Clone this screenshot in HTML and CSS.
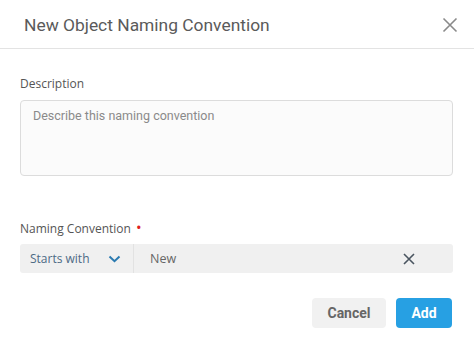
FILE: index.html
```html
<!DOCTYPE html>
<html lang="en">
<head>
    <meta charset="UTF-8">
    <title>New Object Naming Convention</title>
    <link rel="stylesheet" href="styles.css">
</head>
<body>
    <div class="dialog">
        <div class="dialog-header">
            <span class="dialog-title">New Object Naming Convention</span>
            <button class="close-btn" aria-label="Close">
                <svg width="16" height="16" viewBox="0 0 16 16"><path d="M1.5 1.5 L14.5 14.5 M14.5 1.5 L1.5 14.5" stroke="#8a8a8a" stroke-width="1.6" fill="none"/></svg>
            </button>
        </div>
        <div class="dialog-body">
            <label class="field-label">Description</label>
            <textarea class="desc-input" placeholder="Describe this naming convention"></textarea>

            <label class="field-label naming-label">Naming Convention <span class="required">&bull;</span></label>
            <div class="naming-row">
                <div class="mode-select">
                    <span>Starts with</span>
                    <svg width="13" height="8" viewBox="0 0 13 8"><path d="M1.5 1.5 L6.5 6.2 L11.5 1.5" stroke="#2a7ab0" stroke-width="2" fill="none"/></svg>
                </div>
                <div class="value-input">
                    <span>New</span>
                    <svg width="12" height="12" viewBox="0 0 12 12"><path d="M1 1 L11 11 M11 1 L1 11" stroke="#4a5560" stroke-width="1.6" fill="none"/></svg>
                </div>
            </div>
        </div>
        <div class="dialog-footer">
            <button class="btn btn-cancel">Cancel</button>
            <button class="btn btn-add">Add</button>
        </div>
    </div>
</body>
</html>
```

FILE: styles.css
```css
body, html {
    margin: 0;
    padding: 0;
    background: #fff;
    font-family: Roboto, 'Liberation Sans', Arial, sans-serif;
}
.dialog {
    width: 474px;
    height: 350px;
    background: #fff;
}
.dialog-header {
    display: flex;
    align-items: center;
    height: 48px;
    padding: 0 16px 0 24px;
    border-bottom: 1px solid #e3e3e3;
}
.dialog-title {
    flex: 1;
    font-size: 17.4px;
    color: #5a5a5a;
    padding-top: 1px;
}
.close-btn {
    border: none;
    background: none;
    padding: 0;
    width: 16px;
    height: 16px;
    margin-top: 2px;
    cursor: pointer;
}
.dialog-body {
    padding: 26px 21px 0 20px;
}
.field-label {
    display: block;
    font-family: 'Open Sans', 'Liberation Sans', sans-serif;
    font-size: 12px;
    color: #555;
    height: 17px;
    line-height: 17px;
}
.desc-input {
    display: block;
    box-sizing: border-box;
    width: 433px;
    height: 76px;
    margin-top: 8px;
    padding: 7px 12px;
    border: 1px solid #dcdcdc;
    border-radius: 4px;
    background: #fbfbfb;
    font-family: Roboto, 'Liberation Sans', sans-serif;
    font-size: 12.5px;
    resize: none;
    outline: none;
}
.desc-input::placeholder {
    color: #8a8a8a;
}
.naming-label {
    margin-top: 44px;
}
.required {
    color: #e02020;
    font-size: 15px;
    line-height: 10px;
    margin-left: 2px;
}
.naming-row {
    display: flex;
    height: 29px;
    margin-top: 7px;
    width: 433px;
    background: #f0f0f0;
    border-radius: 3px;
}
.mode-select {
    display: flex;
    align-items: center;
    justify-content: space-between;
    width: 114px;
    box-sizing: border-box;
    padding: 0 12px 0 10px;
    border-right: 1px solid #e2e2e2;
    font-family: 'Open Sans', 'Liberation Sans', sans-serif;
    font-size: 12px;
    color: #4d6a85;
}
.value-input {
    flex: 1;
    display: flex;
    align-items: center;
    justify-content: space-between;
    padding: 0 38px 0 16px;
    font-family: 'Open Sans', 'Liberation Sans', sans-serif;
    font-size: 12.5px;
    color: #666;
}
.dialog-footer {
    display: flex;
    justify-content: flex-end;
    gap: 10px;
    padding: 25px 22px 0 0;
}
.btn {
    height: 30px;
    border: none;
    border-radius: 4px;
    font-family: Roboto, 'Liberation Sans', sans-serif;
    font-size: 14px;
    font-weight: 700;
    cursor: pointer;
}
.btn-cancel {
    width: 74px;
    background: #f1f1f1;
    color: #666;
}
.btn-add {
    width: 56px;
    background: #27a0e3;
    color: #fff;
}
```
